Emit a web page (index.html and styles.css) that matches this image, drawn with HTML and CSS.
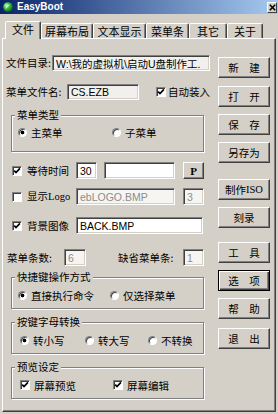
FILE: index.html
```html
<!DOCTYPE html>
<html>
<head>
<meta charset="utf-8">
<link rel="stylesheet" href="styles.css">
</head>
<body>
<div class="window">
  <div class="titlebar">
    <svg class="app-icon" viewBox="0 0 10 10">
      <defs>
        <radialGradient id="gi" cx="35%" cy="35%" r="70%">
          <stop offset="0" stop-color="#d8ffc8"/>
          <stop offset="0.45" stop-color="#3cbf3c"/>
          <stop offset="1" stop-color="#0b6a16"/>
        </radialGradient>
      </defs>
      <circle cx="5" cy="5" r="4.8" fill="url(#gi)"/>
      <path d="M3 6.5 Q3.5 3.5 6.5 3" stroke="#fff" stroke-width="0.9" fill="none" opacity="0.8"/>
    </svg>
    <span class="title">EasyBoot</span>
    <span class="close">
      <svg viewBox="0 0 7 7" width="7" height="7"><path d="M0.8 0.8 L6.2 6.2 M6.2 0.8 L0.8 6.2" stroke="#000" stroke-width="1.6"/></svg>
    </span>
  </div>

  <div class="tabs">
    <div class="tab active t1">文件</div>
    <div class="tab t2">屏幕布局</div>
    <div class="tab t3">文本显示</div>
    <div class="tab t4">菜单条</div>
    <div class="tab t5">其它</div>
    <div class="tab t6">关于</div>
  </div>

  <div class="panel">
    <div class="left">
      <div class="row r1">
        <span class="lbl w-dir">文件目录:</span>
        <span class="field ro f-dir">W:\我的虚拟机\启动U盘制作工.</span>
      </div>
      <div class="row r2">
        <span class="lbl w-menu">菜单文件名:</span>
        <span class="field ro f-menu">CS.EZB</span>
        <span class="check cb-auto"><svg viewBox="0 0 8 8"><path d="M1.2 3.6 L3 5.6 L6.9 1.4" stroke="#000" stroke-width="1.7" fill="none"/></svg></span>
        <span class="lbl w-auto">自动装入</span>
      </div>

      <div class="group g1">
        <span class="legend">菜单类型</span>
        <div class="opts o-first">
          <span class="opt wa"><span class="radio on"></span>主菜单</span>
          <span class="opt"><span class="radio"></span>子菜单</span>
        </div>
      </div>

      <div class="row r3">
        <span class="check cb-row"><svg viewBox="0 0 8 8"><path d="M1.2 3.6 L3 5.6 L6.9 1.4" stroke="#000" stroke-width="1.7" fill="none"/></svg></span>
        <span class="lbl w-cbl">等待时间</span>
        <span class="field f-wait">30</span>
        <span class="field f-wait2"></span>
        <span class="btn btn-p">P</span>
      </div>
      <div class="row r4">
        <span class="check cb-row"></span>
        <span class="lbl w-cbl">显示<span class="latin">Logo</span></span>
        <span class="field dis f-logo">ebLOGO.BMP</span>
        <span class="field dis f-num f-num3">3</span>
      </div>
      <div class="row r5">
        <span class="check cb-row"><svg viewBox="0 0 8 8"><path d="M1.2 3.6 L3 5.6 L6.9 1.4" stroke="#000" stroke-width="1.7" fill="none"/></svg></span>
        <span class="lbl w-cbl">背景图像</span>
        <span class="field f-bg">BACK.BMP</span>
      </div>
      <div class="row r6">
        <span class="lbl w-cnt">菜单条数:</span>
        <span class="field dis f-cnt">6</span>
        <span class="lbl w-def">缺省菜单条:</span>
        <span class="field dis f-num">1</span>
      </div>

      <div class="group g2">
        <span class="legend">快捷键操作方式</span>
        <div class="opts">
          <span class="opt wa2"><span class="radio on"></span>直接执行命令</span>
          <span class="opt"><span class="radio"></span>仅选择菜单</span>
        </div>
      </div>

      <div class="group g3">
        <span class="legend">按键字母转换</span>
        <div class="opts o-wide">
          <span class="opt wb"><span class="radio on"></span>转小写</span>
          <span class="opt wc"><span class="radio"></span>转大写</span>
          <span class="opt"><span class="radio"></span>不转换</span>
        </div>
      </div>

      <div class="group g4">
        <span class="legend">预览设定</span>
        <div class="opts o-wide">
          <span class="opt wa3"><span class="check"><svg viewBox="0 0 8 8"><path d="M1.2 3.6 L3 5.6 L6.9 1.4" stroke="#000" stroke-width="1.7" fill="none"/></svg></span>屏幕预览</span>
          <span class="opt"><span class="check"><svg viewBox="0 0 8 8"><path d="M1.2 3.6 L3 5.6 L6.9 1.4" stroke="#000" stroke-width="1.7" fill="none"/></svg></span>屏幕编辑</span>
        </div>
      </div>
    </div>

    <div class="right">
      <span class="btn">新　建</span>
      <span class="btn sp1">打　开</span>
      <span class="btn">保　存</span>
      <span class="btn">另存为</span>
      <span class="btn sp9">制作<span class="latin">ISO</span></span>
      <span class="btn">刻录</span>
      <span class="btn sp7">工　具</span>
      <span class="btn default">选　项</span>
      <span class="btn">帮　助</span>
      <span class="btn sp2">退　出</span>
    </div>
  </div>
</div>
</body>
</html>
```
FILE: styles.css
```css
html, body {
  margin: 0;
  padding: 0;
}
body {
  width: 278px;
  height: 414px;
  overflow: hidden;
  background: #d4d0c8;
  font-family: "Noto Sans CJK SC", sans-serif;
  font-size: 10.5px;
  color: #000;
}
.window {
  width: 278px;
  height: 414px;
}

/* title bar */
.titlebar {
  height: 14px;
  display: flex;
  align-items: center;
  padding: 0 1px 0 3px;
  background: linear-gradient(to right, #0a246a, #a6caf0);
}
.app-icon {
  width: 10px;
  height: 10px;
  flex: none;
  margin-right: 4px;
}
.title {
  color: #fff;
  font: bold 10px "Liberation Sans", sans-serif;
  line-height: 14px;
}
.close {
  margin-left: auto;
  width: 10px;
  height: 11px;
  box-sizing: border-box;
  background: #d4d0c8;
  border: 1px solid;
  border-color: #fff #404040 #404040 #fff;
  display: flex;
  align-items: center;
  justify-content: center;
}

/* tabs */
.tabs {
  height: 24px;
  display: flex;
  align-items: flex-end;
  padding-left: 5px;
}
.tab {
  height: 15px;
  box-sizing: border-box;
  border: 1px solid;
  border-bottom: none;
  border-color: #fff #404040 transparent #fff;
  box-shadow: inset -1px 0 #808080;
  border-radius: 2px 2px 0 0;
  display: flex;
  align-items: center;
  justify-content: center;
  font-size: 11px;
  line-height: 1;
  flex: none;
}
.tab.active {
  height: 18px;
  margin-bottom: -1px;
  padding-bottom: 2px;
  position: relative;
  z-index: 1;
  background: #d4d0c8;
}
.t1 { width: 36px; }
.t2 { width: 52px; }
.t3 { width: 53px; }
.t4 { width: 43px; }
.t5 { width: 38px; }
.t6 { width: 36px; }

/* panel */
.panel {
  display: flex;
  height: 374px;
  box-sizing: border-box;
  margin: 0 2px;
  border: 1px solid;
  border-color: #fff #404040 #404040 #fff;
  box-shadow: inset -1px -1px #808080;
}
.left {
  flex: none;
  width: 209px;
  box-sizing: border-box;
  padding-left: 3px;
}
.right {
  flex: none;
  padding-left: 6px;
  padding-top: 18px;
  display: flex;
  flex-direction: column;
  gap: 7px;
}

.row {
  display: flex;
  align-items: center;
}
.r1 { margin-top: 16px; height: 16px; }
.r2 { margin-top: 13px; height: 16px; }
.r3 { margin-top: 10px; height: 17px; }
.r4 { margin-top: 9px; height: 17px; }
.r5 { margin-top: 12px; height: 17px; }
.r6 { margin-top: 15px; height: 17px; }

.lbl {
  white-space: nowrap;
  flex: none;
  line-height: 12px;
}
.latin {
  font-family: "Liberation Serif", serif;
}
.w-dir { width: 46px; }
.w-menu { width: 61px; }
.w-auto { margin-left: 2px; }
.w-cbl { width: 49px; margin-left: 5px; }
.w-cnt { width: 57px; margin-left: 1px; }
.w-def { width: 65px; margin-left: 32px; }

/* text fields */
.field {
  box-sizing: border-box;
  height: 100%;
  flex: none;
  background: #fff;
  border: 1px solid;
  border-color: #808080 #fff #fff #808080;
  box-shadow: inset 1px 1px #404040, inset -1px -1px #d4d0c8;
  font-family: "Liberation Sans", "Noto Sans CJK SC", sans-serif;
  font-size: 10.5px;
  padding-left: 3px;
  display: flex;
  align-items: center;
  white-space: nowrap;
  overflow: hidden;
}
.field.ro { background: #f1f0ec; }
.field.dis { color: #8c8c8c; background: #f6f5f2; }
.f-dir { width: 158px; }
.f-menu { width: 72px; }
.f-wait { width: 21px; }
.f-wait2 { width: 71px; margin-left: 7px; }
.f-logo { width: 99px; }
.f-num { width: 21px; }
.f-num3 { margin-left: 8px; }
.f-bg { width: 127px; }
.f-cnt { width: 22px; }

/* checkbox & radio */
.check {
  width: 10px;
  height: 10px;
  box-sizing: border-box;
  flex: none;
  border: 1px solid;
  border-color: #808080 #fff #fff #808080;
  box-shadow: inset 1px 1px #404040;
  background: #fff;
  display: flex;
}
.check svg {
  width: 8px;
  height: 8px;
}
.cb-auto { margin-left: 17px; }
.cb-row { margin-left: 6px; }

.radio {
  width: 9px;
  height: 9px;
  box-sizing: border-box;
  flex: none;
  border-radius: 50%;
  border: 1px solid;
  border-color: #808080 #fff #fff #808080;
  box-shadow: inset 1px 1px #404040;
  background: #fff;
}
.radio.on {
  background: radial-gradient(circle, #000 0 1.6px, #fff 2.2px);
}

/* group boxes */
.group {
  box-sizing: border-box;
  margin-left: 5px;
  width: 193px;
  border: 1px solid #808080;
  box-shadow: inset 1px 1px #fff, 1px 1px #fff;
}
.g1 { margin-top: 15px; height: 37px; }
.g2 { margin-top: 11px; height: 32px; }
.g3 { margin-top: 13px; height: 32px; }
.g4 { margin-top: 13px; height: 32px; }
.legend {
  display: block;
  width: max-content;
  margin: -7px 0 0 3px;
  padding: 0 2px;
  background: #d4d0c8;
  line-height: 12px;
}
.opts {
  display: flex;
  align-items: center;
  height: 12px;
  margin-top: 6px;
  padding-left: 6px;
}
.o-first { margin-top: 5px; }
.o-wide { padding-left: 8px; }
.opt {
  display: flex;
  align-items: center;
  gap: 4px;
  white-space: nowrap;
  flex: none;
}
.wa { width: 94px; }
.wa2 { width: 92px; }
.wa3 { width: 93px; }
.wb { width: 65px; }
.wc { width: 63px; }

/* buttons */
.btn {
  box-sizing: border-box;
  width: 52px;
  height: 21px;
  flex: none;
  display: flex;
  align-items: center;
  justify-content: center;
  background: #d4d0c8;
  border: 1px solid;
  border-color: #fff #404040 #404040 #fff;
  box-shadow: inset -1px -1px #808080;
  font-size: 10.5px;
  white-space: nowrap;
}
.btn.default {
  border-color: #000;
  box-shadow: inset 1px 1px #fff, inset -1px -1px #404040, inset -2px -2px #808080;
}
.btn-p {
  width: 21px;
  height: 17px;
  margin-left: 8px;
  font: bold 11px "Liberation Serif", serif;
}
.sp1 { margin-top: 1px; }
.sp9 { margin-top: 9px; }
.sp7 { margin-top: 7px; }
.sp2 { margin-top: 2px; }
```
